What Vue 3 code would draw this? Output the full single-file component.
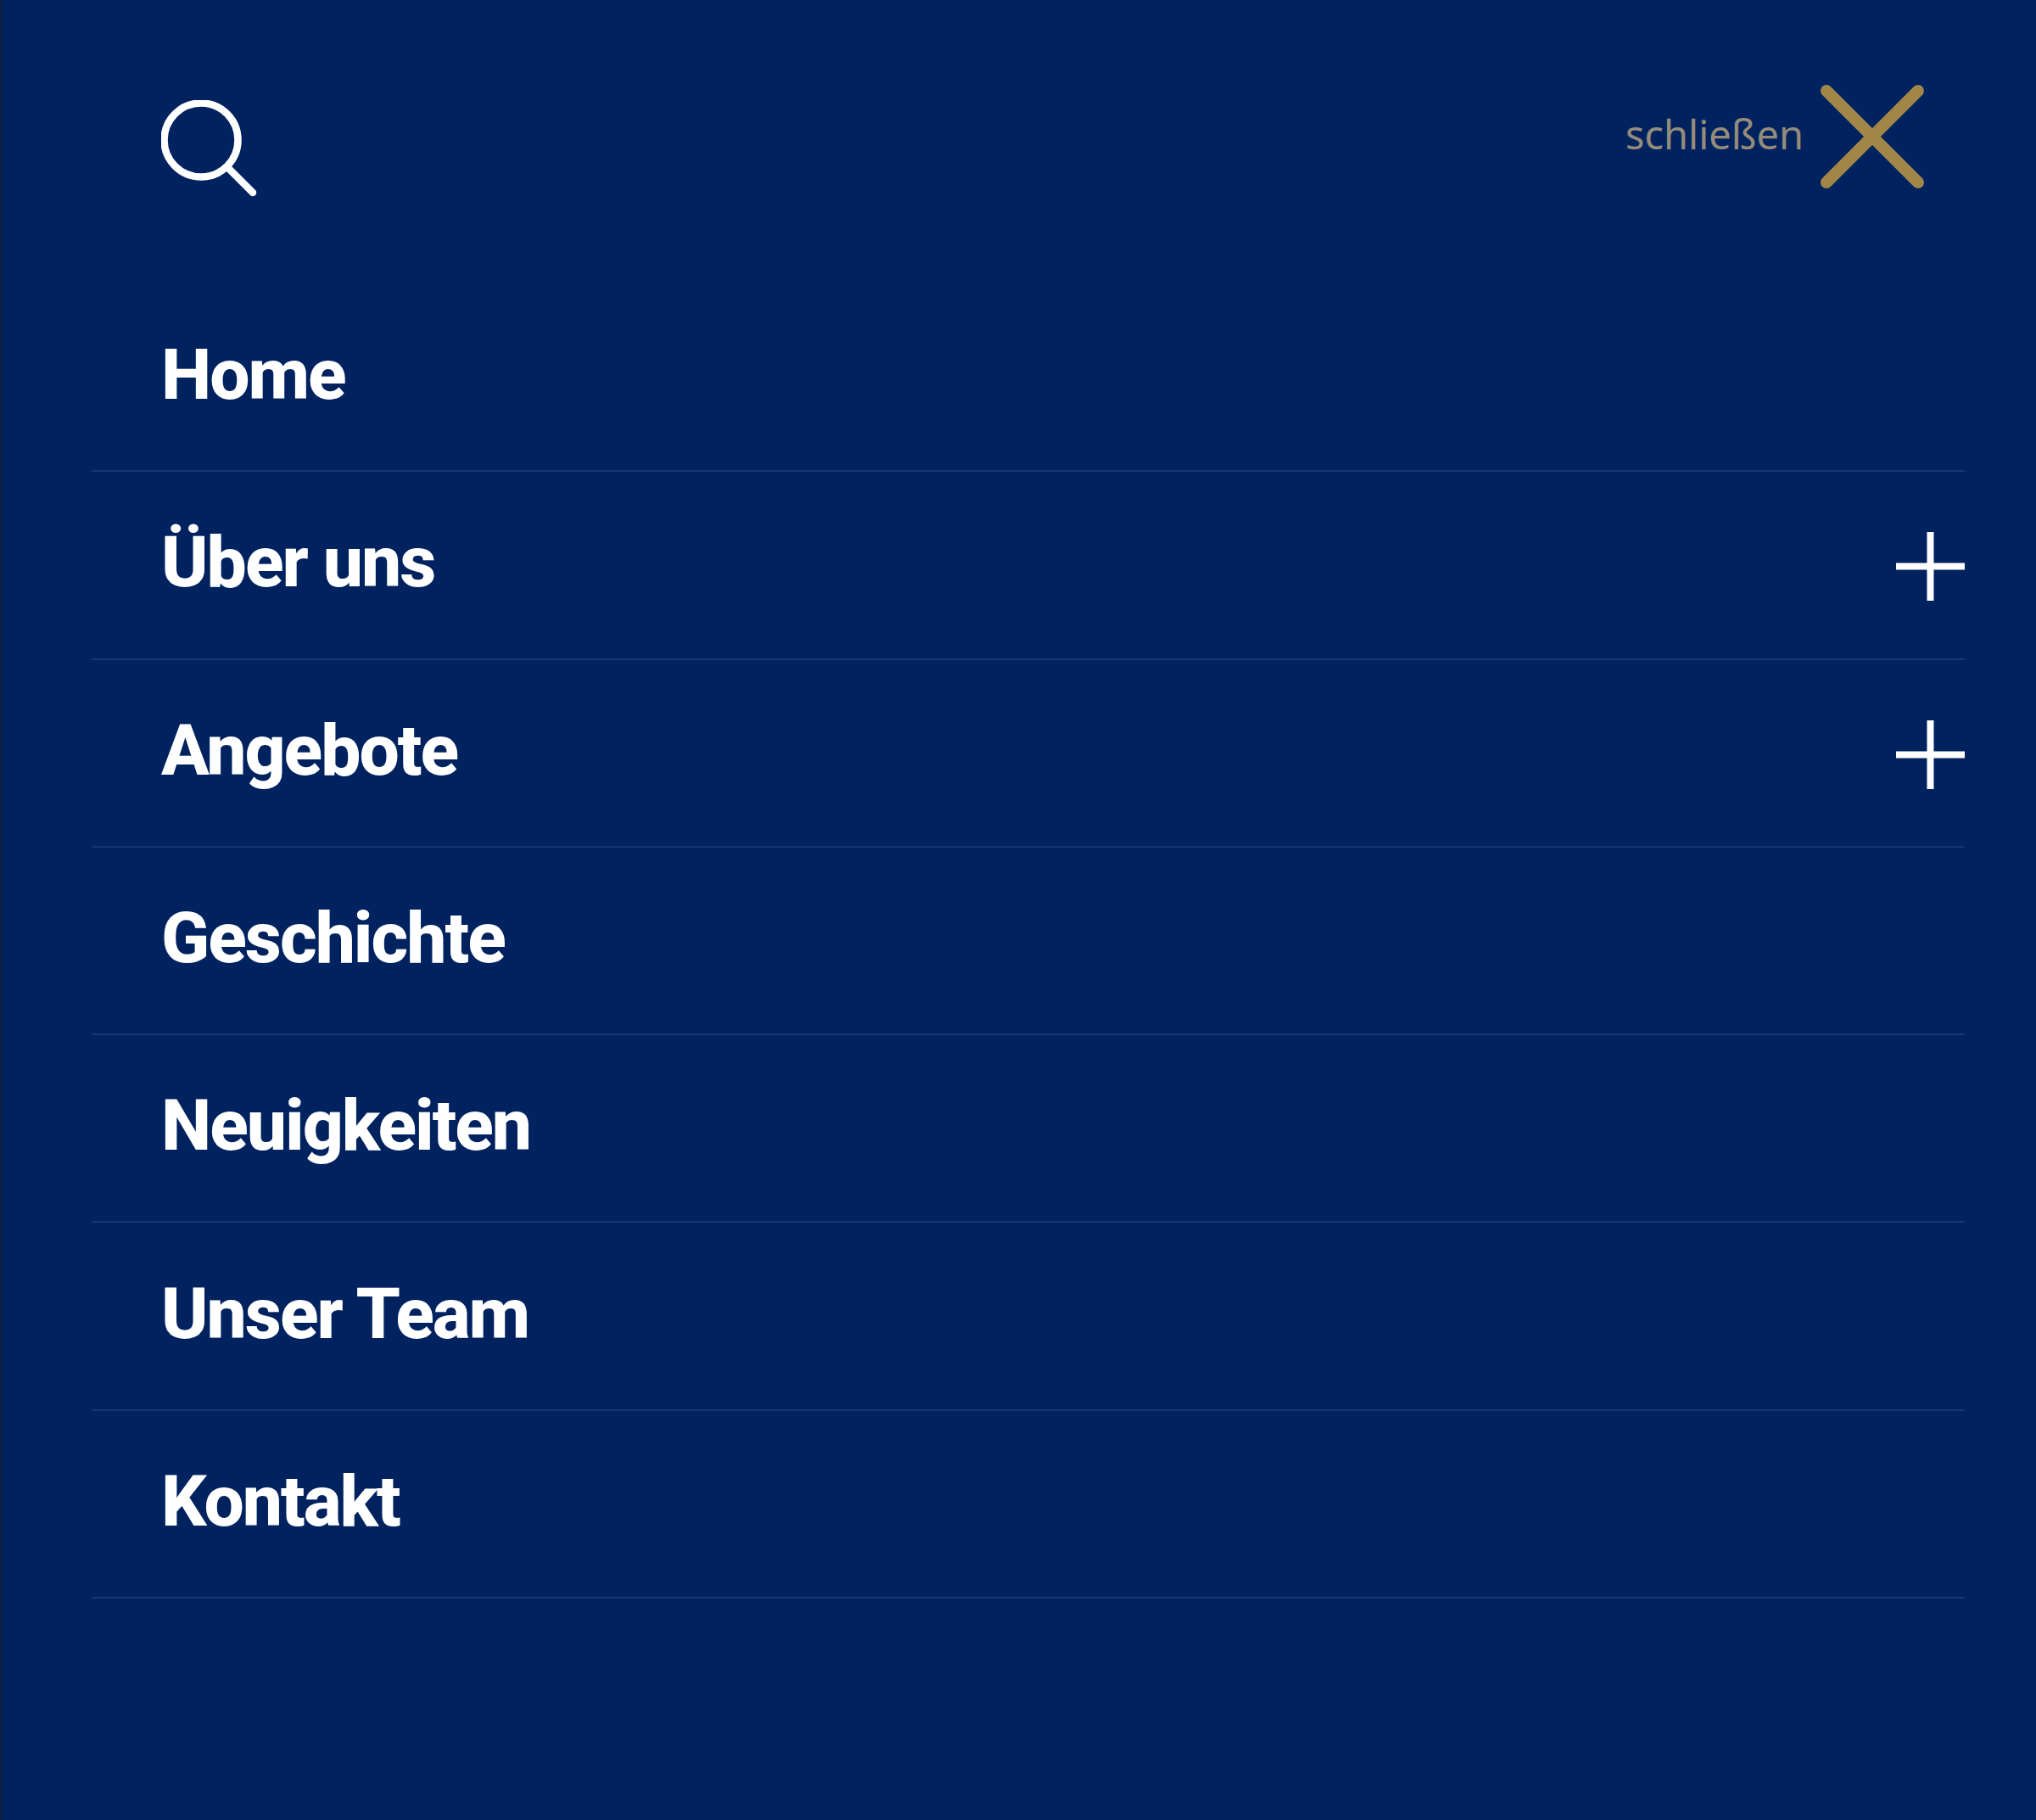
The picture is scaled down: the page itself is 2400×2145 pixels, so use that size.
<template>
  <div class="menu">
    <div class="top">
      <button class="search-btn" aria-label="Suche">
        <svg width="116" height="116" viewBox="0 0 116 116">
          <circle cx="47" cy="47" r="43.5" fill="none" stroke="#fff" stroke-width="8.5" />
          <path d="M78 79 L108 109" fill="none" stroke="#fff" stroke-width="8.5" stroke-linecap="round" />
        </svg>
      </button>
      <button class="close-btn">
        <span>schließen</span>
        <svg width="122" height="122" viewBox="0 0 122 122">
          <path d="M7 7 L115 115 M115 7 L7 115" fill="none" stroke="#a08647" stroke-width="14" stroke-linecap="round" />
        </svg>
      </button>
    </div>
    <ul class="nav">
      <li v-for="item in items" :key="item.label">
        <a href="#">{{ item.label }}</a>
        <svg v-if="item.sub" class="plus" width="81" height="81" viewBox="0 0 81 81">
          <path d="M0 40.5 H81 M40.5 0 V81" fill="none" stroke="#fff" stroke-width="8" />
        </svg>
      </li>
    </ul>
  </div>
</template>

<script setup>
const items = [
  { label: "Home" },
  { label: "Über uns", sub: true },
  { label: "Angebote", sub: true },
  { label: "Geschichte" },
  { label: "Neuigkeiten" },
  { label: "Unser Team" },
  { label: "Kontakt" },
];
</script>

<style>
html,
body {
  margin: 0;
  background: #002360;
}
</style>

<style scoped>
.menu {
  box-sizing: border-box;
  height: 2145px;
  background: #002360;
  border-left: 2px solid #10203f;
  padding: 100px 84px 0 106px;
  font-family: "Noto Sans", "Open Sans", sans-serif;
}

.top {
  display: flex;
  justify-content: space-between;
  align-items: flex-start;
  height: 235px;
  padding-right: 48px;
}

.search-btn,
.close-btn {
  background: none;
  border: 0;
  padding: 0;
  display: flex;
}

.search-btn {
  margin: 18px 0 0 82px;
}

.close-btn {
  align-items: center;
  gap: 20px;
  font-family: "Noto Sans", sans-serif;
  font-size: 47px;
  color: #958c7c;
}

.close-btn span {
  position: relative;
  top: -3px;
}

.nav {
  list-style: none;
  margin: 0;
  padding: 0;
}

.nav li {
  box-sizing: border-box;
  height: 221.3px;
  border-bottom: 2px solid #12386f;
  display: flex;
  align-items: center;
  justify-content: space-between;
  padding-left: 82px;
}

.nav a {
  color: #fff;
  text-decoration: none;
  font-family: Roboto, sans-serif;
  font-size: 84px;
  font-weight: 800;
  letter-spacing: -2px;
  position: relative;
  top: -3px;
}

.plus {
  position: relative;
  top: 2px;
}
</style>
